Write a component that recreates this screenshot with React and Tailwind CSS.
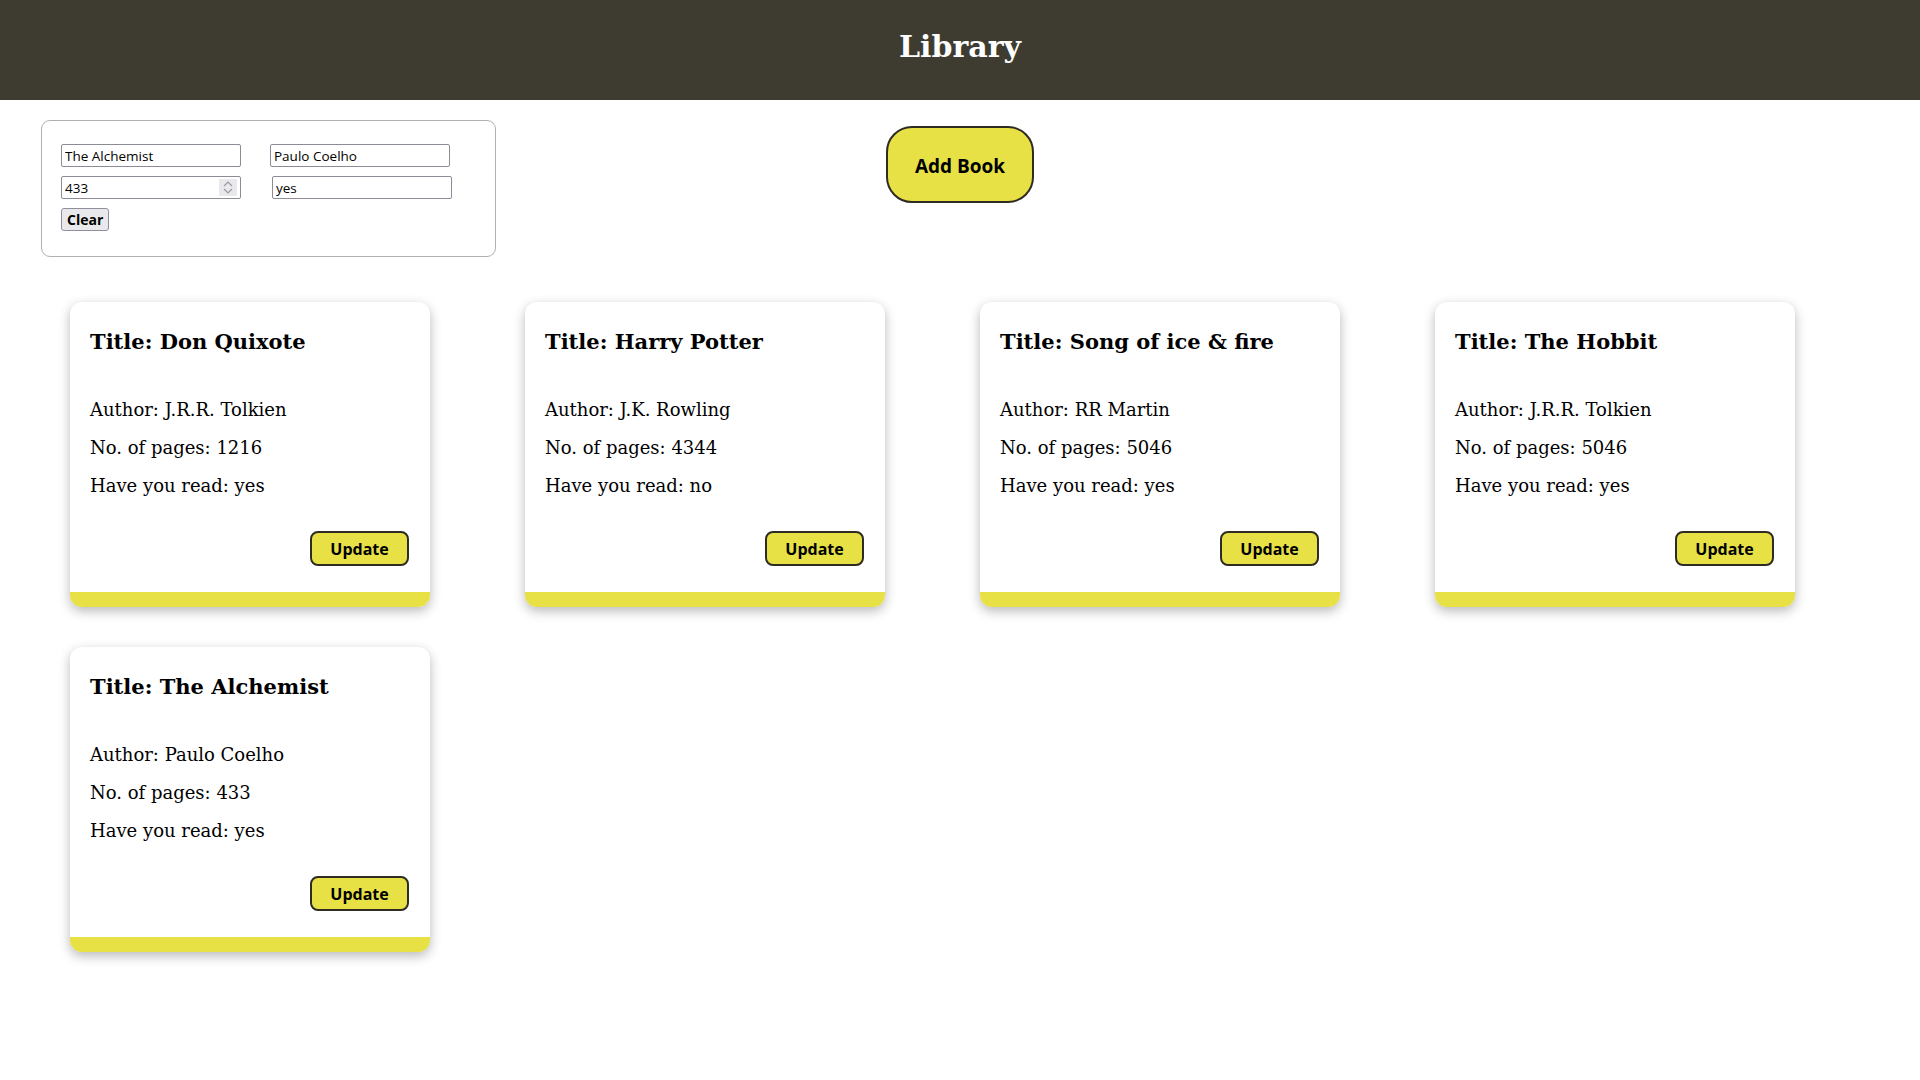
import React from 'react';

const books = [
    { title: 'Don Quixote', author: 'J.R.R. Tolkien', pages: 1216, read: 'yes' },
    { title: 'Harry Potter', author: 'J.K. Rowling', pages: 4344, read: 'no' },
    { title: 'Song of ice & fire', author: 'RR Martin', pages: 5046, read: 'yes' },
    { title: 'The Hobbit', author: 'J.R.R. Tolkien', pages: 5046, read: 'yes' },
    { title: 'The Alchemist', author: 'Paulo Coelho', pages: 433, read: 'yes' },
];

const serif = "font-['DejaVu_Serif','Liberation_Serif',serif]";
const sans = "font-['Open_Sans','Noto_Sans',sans-serif]";

const inputCls = `block h-[23px] w-[180px] border border-[#8d8b96] rounded-[2px] px-[3px] text-[13.5px] text-black bg-white outline-none ${sans}`;

const BookCard = ({ book }) => {
    return (
        <div className="w-[360px] h-[305px] bg-white rounded-[12px] overflow-hidden shadow-[0_4px_12px_rgba(0,0,0,0.28)] flex flex-col">
            <div className={`flex-1 px-5 pt-[25px] text-black ${serif}`}>
                <h2 className="text-[21px] leading-[30px] font-bold">Title: {book.title}</h2>
                <div className="mt-[34px] text-[18px] leading-[38px]">
                    <p>Author: {book.author}</p>
                    <p>No. of pages: {book.pages}</p>
                    <p>Have you read: {book.read}</p>
                </div>
                <div className="flex justify-end mt-[26px] mr-[1px]">
                    <button className={`w-[99px] h-[35px] rounded-[8px] border-2 border-[#2e2b22] bg-[#e7e146] text-[16px] font-bold text-black ${sans}`}>
                        Update
                    </button>
                </div>
            </div>
            <div className="h-[15px] bg-[#e7e146]"></div>
        </div>
    );
};

export default function App() {
    return (
        <div className="min-h-screen bg-white">
            {/* Header */}
            <header className="h-[100px] bg-[#3e3c30] flex items-center justify-center">
                <h1 className={`text-white text-[30px] font-bold pb-[8px] ${serif}`}>Library</h1>
            </header>

            {/* Form + add button */}
            <div className="grid grid-cols-[1fr_auto_1fr] px-[41px] mt-[20px]">
                <form className="w-[455px] h-[137px] border border-[#b0b0b0] rounded-[9px] pl-[19px] pt-[23px] flex flex-col gap-[9px]">
                    <div className="flex gap-[29px]">
                        <input className={inputCls} defaultValue="The Alchemist" />
                        <input className={`${inputCls} w-[179px]`} defaultValue="Paulo Coelho" />
                    </div>
                    <div className="flex gap-[31px]">
                        <div className="relative">
                            <input className={inputCls} defaultValue="433" />
                            {/* spin buttons */}
                            <div className="absolute right-[4px] top-[3px] w-[18px] h-[17px] bg-[#e9e9ed] flex flex-col items-center justify-center gap-[1px]">
                                <svg width="10" height="6" viewBox="0 0 10 6" fill="none" stroke="#9a9a9e" strokeWidth="1.2">
                                    <path d="M1 5 L5 1 L9 5" />
                                </svg>
                                <svg width="10" height="6" viewBox="0 0 10 6" fill="none" stroke="#9a9a9e" strokeWidth="1.2">
                                    <path d="M1 1 L5 5 L9 1" />
                                </svg>
                            </div>
                        </div>
                        <input className={inputCls} defaultValue="yes" />
                    </div>
                    <div className="flex">
                        <button
                            type="button"
                            className={`h-[23px] px-[5px] rounded-[3px] border border-[#8f8f9d] bg-[#e9e9ed] text-[14px] leading-none font-bold text-black ${sans}`}
                        >
                            Clear
                        </button>
                    </div>
                </form>
                <div className="pt-[6px]">
                    <button className={`w-[148px] h-[77px] rounded-[26px] border-2 border-[#2e2b22] bg-[#e7e146] pt-[3px] text-[19px] font-bold text-black ${sans}`}>
                        Add Book
                    </button>
                </div>
                <div></div>
            </div>

            {/* Books */}
            <div className="flex flex-wrap gap-x-[95px] gap-y-[40px] pl-[70px] mt-[45px] pb-10">
                {books.map((b, i) => (
                    <BookCard key={i} book={b} />
                ))}
            </div>
        </div>
    );
}
